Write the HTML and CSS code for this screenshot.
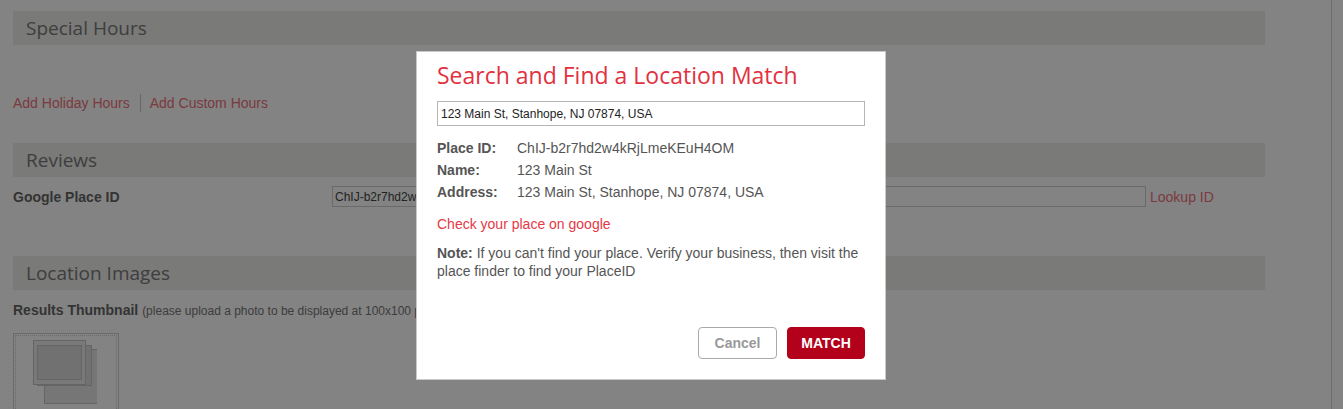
FILE: index.html
```html
<!DOCTYPE html>
<html>
<head>
<meta charset="utf-8">
<title>Location</title>
<link rel="stylesheet" href="styles.css">
</head>
<body>
<div class="page">
  <main class="content">
    <section class="section">
      <h2 class="section-bar">Special Hours</h2>
      <div class="hour-links">
        <a class="link" href="#">Add Holiday Hours</a>
        <span class="sep"></span>
        <a class="link" href="#">Add Custom Hours</a>
      </div>
    </section>
    <section class="section reviews">
      <h2 class="section-bar">Reviews</h2>
      <div class="place-row">
        <label class="field-label">Google Place ID</label>
        <input class="place-input" type="text" value="ChIJ-b2r7hd2w">
        <a class="link lookup" href="#">Lookup ID</a>
      </div>
    </section>
    <section class="section images">
      <h2 class="section-bar">Location Images</h2>
      <div class="thumb-label"><b>Results Thumbnail</b> <span class="hint">(please upload a photo to be displayed at 100x100 pixels)</span></div>
      <div class="thumb-box">
        <div class="thumb-inner">
          <svg class="thumb-icon" width="64" height="70" viewBox="0 0 64 70">
            <rect x="11.5" y="9.5" width="53" height="54" fill="#e6e6e6" stroke="#c4c4c4"/>
            <rect x="4.5" y="5.5" width="54" height="40" fill="#dcdcdc" stroke="#c4c4c4"/>
            <rect x="0.5" y="0.5" width="52" height="44" fill="#ececec" stroke="#c4c4c4"/>
            <rect x="4.5" y="5.5" width="44" height="34" fill="#dcdcdc" stroke="#c4c4c4"/>
          </svg>
        </div>
      </div>
    </section>
  </main>
  <div class="scroll-edge"></div>
</div>

<div class="overlay"></div>

<div class="modal">
  <h1 class="modal-title">Search and Find a Location Match</h1>
  <input class="modal-input" type="text" value="123 Main St, Stanhope, NJ 07874, USA">
  <dl class="details">
    <dt>Place ID:</dt><dd>ChIJ-b2r7hd2w4kRjLmeKEuH4OM</dd>
    <dt>Name:</dt><dd>123 Main St</dd>
    <dt>Address:</dt><dd>123 Main St, Stanhope, NJ 07874, USA</dd>
  </dl>
  <a class="modal-link" href="#">Check your place on google</a>
  <p class="note"><b>Note:</b> If you can't find your place. Verify your business, then visit the place finder to find your PlaceID</p>
  <div class="actions">
    <button class="btn btn-cancel">Cancel</button>
    <button class="btn btn-match">MATCH</button>
  </div>
</div>
</body>
</html>
```

FILE: styles.css
```css
html, body {
  margin: 0;
  padding: 0;
  height: 100%;
  overflow: hidden;
}
body {
  background: #ffffff;
  font-family: "Liberation Sans", Arial, sans-serif;
  font-size: 14px;
  color: #666;
}
.page {
  display: flex;
  height: 100%;
}
.content {
  width: 1252px;
  padding: 11px 66px 0 13px;
  flex: none;
}
.scroll-edge {
  flex: 1;
  border-left: 1px solid #d4d4d4;
}
.section-bar {
  margin: 0;
  height: 34px;
  line-height: 34px;
  background: #ededea;
  padding-left: 13px;
  font-family: "Open Sans", sans-serif;
  font-weight: 400;
  font-size: 19px;
  color: #7a7a7a;
}
.hour-links {
  display: flex;
  align-items: center;
  margin-top: 49px;
  height: 18px;
}
.link {
  color: #f0727c;
  text-decoration: none;
  font-size: 14px;
}
.sep {
  width: 1px;
  height: 18px;
  background: #c8c8c8;
  margin: 0 9px 0 10px;
}
.reviews {
  margin-top: 31px;
}
.place-row {
  display: flex;
  align-items: center;
  margin-top: 9px;
  height: 21px;
}
.field-label {
  width: 319px;
  font-weight: bold;
  color: #666;
}
.place-input {
  width: 814px;
  height: 21px;
  box-sizing: border-box;
  border: 1px solid #cfcfcf;
  padding: 0 2px;
  font-family: "Liberation Sans", Arial, sans-serif;
  font-size: 12px;
  color: #444;
  background: #fff;
  margin: 0 4px 0 0;
}
.images {
  margin-top: 49px;
}
.thumb-label {
  margin-top: 12px;
  font-size: 14px;
  color: #666;
  line-height: 16px;
}
.thumb-label b {
  color: #666;
}
.hint {
  font-size: 12px;
  color: #777;
}
.thumb-box {
  margin-top: 14px;
  width: 102px;
  height: 102px;
  border: 1px solid #d0d0d0;
  padding: 1px;
  box-sizing: content-box;
}
.thumb-inner {
  height: 100%;
  border: 1px dotted #d0d0d0;
  box-sizing: border-box;
  padding: 4px 0 0 17px;
}
.thumb-icon {
  display: block;
}

.overlay {
  position: fixed;
  inset: 0;
  background: rgba(0, 0, 0, 0.486);
}

.modal {
  position: absolute;
  left: 416px;
  top: 51px;
  width: 428px;
  padding: 9px 20px 20px 20px;
  background: #fff;
  border: 1px solid #c9c9c9;
  color: #555;
}
.modal-title {
  margin: 0;
  font-family: "Open Sans", sans-serif;
  font-weight: 400;
  font-size: 23px;
  line-height: 29px;
  color: #e2313f;
}
.modal-input {
  display: block;
  box-sizing: border-box;
  width: 428px;
  height: 25px;
  margin-top: 11px;
  border: 1px solid #b5b5b5;
  padding: 0 3px;
  font-family: "Liberation Sans", Arial, sans-serif;
  font-size: 12px;
  color: #222;
}
.details {
  display: grid;
  grid-template-columns: 80px 1fr;
  margin: 11px 0 0 0;
  line-height: 22px;
  font-size: 14px;
}
.details dt {
  font-weight: bold;
  color: #555;
}
.details dd {
  margin: 0;
  color: #555;
}
.modal-link {
  display: block;
  margin-top: 10px;
  line-height: 22px;
  color: #e53946;
  text-decoration: none;
}
.note {
  margin: 9px 0 0 0;
  line-height: 18px;
  font-size: 14px;
  color: #555;
}
.actions {
  display: flex;
  justify-content: flex-end;
  gap: 10px;
  margin-top: 47px;
}
.btn {
  height: 32px;
  box-sizing: border-box;
  border-radius: 4px;
  font-family: "Liberation Sans", Arial, sans-serif;
  font-weight: bold;
  font-size: 14px;
  cursor: pointer;
}
.btn-cancel {
  width: 79px;
  background: #fff;
  border: 1px solid #aaa;
  color: #999;
}
.btn-match {
  width: 78px;
  background: #b3001b;
  border: 1px solid #b3001b;
  color: #fff;
}
```
